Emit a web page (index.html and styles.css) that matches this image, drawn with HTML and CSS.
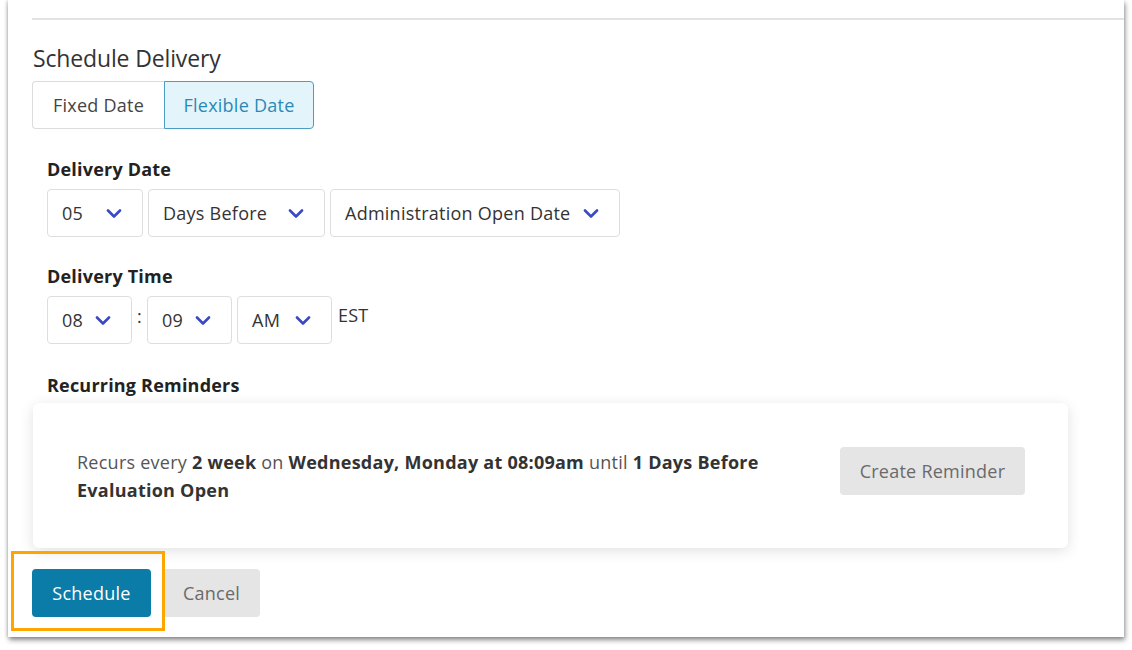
FILE: index.html
```html
<!DOCTYPE html>
<html lang="en">
<head>
<meta charset="utf-8">
<title>Schedule Delivery</title>
<link rel="stylesheet" href="styles.css">
</head>
<body>
<div class="frame">
  <div class="rule"></div>
  <h2 class="title">Schedule Delivery</h2>
  <div class="toggle">
    <button class="tog">Fixed Date</button>
    <button class="tog tog-active">Flexible Date</button>
  </div>
  <div class="section">
    <div class="label label-date">Delivery Date</div>
    <div class="row">
      <div class="select w-05"><span>05</span><svg class="chev" viewBox="0 0 16 9"><path d="M2 1.5 L8 7.5 L14 1.5"/></svg></div>
      <div class="select w-days"><span>Days Before</span><svg class="chev" viewBox="0 0 16 9"><path d="M2 1.5 L8 7.5 L14 1.5"/></svg></div>
      <div class="select w-admin"><span>Administration Open Date</span><svg class="chev" viewBox="0 0 16 9"><path d="M2 1.5 L8 7.5 L14 1.5"/></svg></div>
    </div>
    <div class="label label-time">Delivery Time</div>
    <div class="row">
      <div class="select w-hh"><span>08</span><svg class="chev" viewBox="0 0 16 9"><path d="M2 1.5 L8 7.5 L14 1.5"/></svg></div>
      <span class="colon">:</span>
      <div class="select w-hh"><span>09</span><svg class="chev" viewBox="0 0 16 9"><path d="M2 1.5 L8 7.5 L14 1.5"/></svg></div>
      <div class="select w-ampm"><span>AM</span><svg class="chev" viewBox="0 0 16 9"><path d="M2 1.5 L8 7.5 L14 1.5"/></svg></div>
      <span class="tz">EST</span>
    </div>
    <div class="label label-rec">Recurring Reminders</div>
  </div>
  <div class="card">
    <p class="card-text">Recurs every <b>2 week</b> on <b>Wednesday, Monday at 08:09am</b> until <b>1 Days Before Evaluation Open</b></p>
    <button class="btn btn-grey btn-create">Create Reminder</button>
  </div>
  <div class="actions">
    <button class="btn btn-primary">Schedule</button>
    <button class="btn btn-grey btn-cancel">Cancel</button>
    <div class="highlight"></div>
  </div>
</div>
</body>
</html>
```

FILE: styles.css
```css
html, body {
  margin: 0;
  padding: 0;
  background: #ffffff;
}

body {
  font-family: "Open Sans", "Noto Sans", "Liberation Sans", sans-serif;
  color: #333333;
  width: 1132px;
  height: 650px;
  overflow: hidden;
  letter-spacing: 0.25px;
}

.frame {
  position: relative;
  box-sizing: border-box;
  margin-left: 8px;
  width: 1116px;
  height: 637px;
  padding: 18px 0 0 24px;
  background: #ffffff;
  box-shadow: 1px 3px 5px rgba(0, 0, 0, 0.45), -1px 0 3px rgba(0, 0, 0, 0.15);
}

.rule {
  height: 2px;
  background: #e3e3e3;
}

.title {
  margin: 22px 0 0 1px;
  font-size: 23px;
  line-height: 32px;
  font-weight: 400;
  color: #333333;
  letter-spacing: -0.15px;
}

.toggle {
  display: flex;
  margin-top: 7px;
  height: 48px;
}

.tog {
  box-sizing: border-box;
  height: 48px;
  font-family: inherit;
  font-size: 18px;
  letter-spacing: 0.25px;
  color: #444444;
  background: #ffffff;
  border: 1px solid #dcdcdc;
  cursor: pointer;
  padding: 0;
}

.tog:first-child {
  width: 132px;
  border-radius: 4px 0 0 4px;
  border-right: none;
}

.tog-active {
  width: 150px;
  background: #e4f4fb;
  border: 1px solid #4a9ec6;
  color: #2a8ab6;
  border-radius: 0 4px 4px 0;
}

.section {
  padding-left: 15px;
}

.label {
  font-size: 18px;
  line-height: 24px;
  font-weight: 700;
  color: #222222;
  letter-spacing: 0.2px;
}

.label-date { margin-top: 28px; }
.label-time { margin-top: 27px; }
.label-rec  { margin-top: 29px; }

.row {
  display: flex;
  align-items: flex-start;
  margin-top: 8px;
  gap: 5px;
}

.select {
  box-sizing: border-box;
  height: 48px;
  display: flex;
  align-items: center;
  justify-content: space-between;
  padding: 0 20px 0 14px;
  border: 1px solid #dedede;
  border-radius: 4px;
  font-size: 18px;
  color: #333333;
  background: #ffffff;
}

.w-05    { width: 96px; }
.w-days  { width: 177px; }
.w-admin { width: 290px; }
.w-hh    { width: 85px; }
.w-ampm  { width: 95px; }

.chev {
  width: 16px;
  height: 9px;
  flex: none;
}

.chev path {
  fill: none;
  stroke: #3a49c4;
  stroke-width: 2.6;
  stroke-linecap: round;
  stroke-linejoin: round;
}

.colon {
  width: 5px;
  text-align: center;
  font-size: 18px;
  line-height: 24px;
  margin-top: 8px;
  color: #333333;
}

.tz {
  font-size: 18px;
  line-height: 24px;
  margin-top: 7px;
  margin-left: 1px;
  color: #333333;
}

.card {
  box-sizing: border-box;
  margin: 6px 0 0 1px;
  width: 1035px;
  height: 145px;
  display: flex;
  align-items: center;
  justify-content: space-between;
  padding: 0 43px 0 44px;
  background: #ffffff;
  border-radius: 6px;
  box-shadow: 0 3px 14px rgba(0, 0, 0, 0.12);
}

.card-text {
  margin: 1px 0 0 0;
  width: 720px;
  font-size: 18px;
  line-height: 28px;
  color: #555555;
}

.card-text b {
  color: #333333;
  font-weight: 700;
}

.btn {
  box-sizing: border-box;
  height: 48px;
  border: none;
  border-radius: 4px;
  font-family: inherit;
  font-size: 18px;
  letter-spacing: 0.25px;
  cursor: pointer;
  padding: 0;
}

.btn-grey {
  background: #e5e5e5;
  color: #6a6a6a;
}

.btn-create {
  width: 185px;
  margin-top: -10px;
}

.actions {
  position: relative;
  display: flex;
  margin-top: 21px;
}

.btn-primary {
  width: 119px;
  background: #0b7ba8;
  color: #ffffff;
}

.btn-cancel {
  width: 97px;
  margin-left: 12px;
}

.highlight {
  position: absolute;
  left: -21px;
  top: -18px;
  width: 154px;
  height: 80px;
  box-sizing: border-box;
  border: 3px solid #ffa500;
  pointer-events: none;
}
```
